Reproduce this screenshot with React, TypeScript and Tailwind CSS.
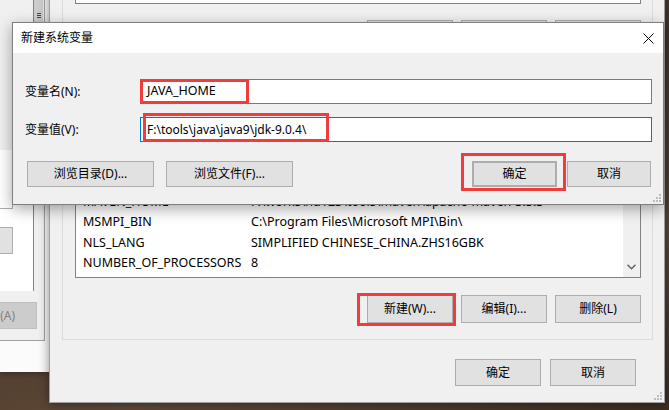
import React from "react";

const FONT = "font-['Noto_Sans','Noto_Sans_CJK_SC',sans-serif]";

function Btn({
  children,
  className = "",
}: {
  children?: React.ReactNode;
  className?: string;
}) {
  return (
    <div
      className={`flex h-full shrink-0 items-center justify-center border border-[#adadad] bg-[#e1e1e1] text-[12px] text-black ${className}`}
    >
      {children}
    </div>
  );
}

// little resize grip in the lower right corner
function Grip() {
  return (
    <svg width="8" height="8" viewBox="0 0 8 8" aria-hidden="true">
      <rect x="6" y="0" width="2" height="2" fill="#bcbcbc" />
      <rect x="3" y="3" width="2" height="2" fill="#bcbcbc" />
      <rect x="6" y="3" width="2" height="2" fill="#bcbcbc" />
      <rect x="0" y="6" width="2" height="2" fill="#bcbcbc" />
      <rect x="3" y="6" width="2" height="2" fill="#bcbcbc" />
      <rect x="6" y="6" width="2" height="2" fill="#bcbcbc" />
    </svg>
  );
}

// rows above MAVEN_HOME are scrolled out of view behind the dialog
const SYS_VARS: [string, string][] = [
  ["MAVEN_HOME", "F:\\works\\nu123\\tools\\maven\\apache-maven-3.5.3"],
  ["MSMPI_BIN", "C:\\Program Files\\Microsoft MPI\\Bin\\"],
  ["NLS_LANG", "SIMPLIFIED CHINESE_CHINA.ZHS16GBK"],
  ["NUMBER_OF_PROCESSORS", "8"],
];

function RedBox({ className }: { className: string }) {
  return (
    <div
      className={`pointer-events-none absolute border-[3px] border-[#f03c3c] ${className}`}
    />
  );
}

export default function App() {
  return (
    <div
      className={`relative h-[410px] w-[669px] overflow-hidden bg-[linear-gradient(160deg,#7a5330_0%,#4a382a_40%,#5d4736_70%,#3b2d22_100%)] ${FONT}`}
    >
      {/* window behind, far left */}
      <div className="absolute left-0 top-0 h-[372px] w-[49px] bg-[#fbfbfb] shadow-[0_2px_6px_rgba(0,0,0,0.3)]" />

      {/* window A (partly off screen) */}
      <div className="absolute left-0 top-0 flex h-[341px] w-[45px] flex-col border-b border-r border-[#a0a0a0] bg-[#f0f0f0]">
        <div className="flex h-[291px]">
          <div className="flex w-[34px] flex-col border-r border-[#828282] bg-white">
            <div className="h-[150px] bg-[#f0f0f0]" />
            <div className="h-[59px] w-[13px] border-b border-r border-[#adadad]" />
            <div className="mt-[18px] h-[27px] w-[13px] border-y border-r border-[#adadad] bg-[#e1e1e1]" />
          </div>
          <div className="flex w-[9px] flex-col">
            <div className="flex h-[22px] flex-col items-center bg-[#cdcdcd] pt-[13px]">
              <div className="h-px w-[4px] bg-[#444]" />
              <div className="mt-[1px] h-px w-[4px] bg-[#444]" />
              <div className="mt-[1px] h-px w-[4px] bg-[#444]" />
            </div>
          </div>
        </div>
        <div className="mt-[11px] flex h-[27px] w-[37px] items-center justify-end border-y border-r border-[#bfbfbf] bg-[#cccccc] pr-[21px] text-[12px] text-[#838383]">
          <span className="whitespace-nowrap">(A)</span>
        </div>
      </div>

      {/* Environment variables window */}
      <div className="absolute left-[49px] top-[-100px] flex h-[503px] w-[616px] flex-col border border-[#9f9f9f] bg-[#f0f0f0] pl-[12px] pr-[11px] shadow-[0_0_10px_rgba(0,0,0,0.45)]">
        {/* user variables group (mostly hidden behind the dialog) */}
        <div className="mt-[9px] flex h-[154px] flex-col border border-[#dcdcdc] px-[12px] pr-[11px] pt-[10px]">
          <div className="h-[83px] border border-[#828282] bg-white" />
          <div className="mt-[16px] flex h-[27px] justify-end gap-[8px]">
            <Btn className="w-[86px]" />
            <Btn className="w-[86px]" />
            <Btn className="w-[86px]" />
          </div>
        </div>

        {/* system variables group */}
        <div className="mt-[11px] flex h-[265px] flex-col border border-[#dcdcdc] px-[12px] pr-[11px] pt-[24px]">
          <div className="relative flex h-[178px] flex-col justify-end overflow-hidden border border-[#828282] bg-white pb-[3px] text-[12.5px] text-black">
            {SYS_VARS.map(([k, v]) => (
              <div key={k} className="flex h-[20.5px] shrink-0 items-center pl-[7px]">
                <span className="w-[168px] shrink-0 whitespace-nowrap">{k}</span>
                <span className="whitespace-nowrap">{v}</span>
              </div>
            ))}
            <div className="absolute bottom-0 right-0 top-0 flex w-[17px] flex-col items-center justify-end bg-[#f0f0f0] pb-[7px]">
              <svg width="9" height="6" viewBox="0 0 9 6" aria-hidden="true">
                <path d="M0.5 0.8 L4.5 4.8 L8.5 0.8" fill="none" stroke="#606060" strokeWidth="1.4" />
              </svg>
            </div>
          </div>
          <div className="mt-[17px] flex h-[28px] justify-end gap-[8px]">
            <Btn className="w-[86px]">新建(W)...</Btn>
            <Btn className="w-[86px]">编辑(I)...</Btn>
            <Btn className="w-[86px]">删除(L)</Btn>
          </div>
        </div>

        <div className="mr-[17px] mt-[19px] flex h-[27px] justify-end gap-[9px]">
          <Btn className="w-[86px]">确定</Btn>
          <Btn className="w-[86px]">取消</Btn>
        </div>
        <div className="absolute bottom-[2px] right-[2px] flex">
          <Grip />
        </div>
      </div>

      {/* dialog: 新建系统变量 */}
      <div className="absolute left-[12px] top-[22px] flex h-[183px] w-[652px] flex-col border border-[#7f7f7f] bg-[#f0f0f0] shadow-[0_4px_14px_rgba(0,0,0,0.35)]">
        <div className="flex h-[30px] shrink-0 items-center justify-between bg-white pl-[8px] pr-[9px] text-[12px] text-black">
          <span>新建系统变量</span>
          <svg width="11" height="11" viewBox="0 0 11 11" aria-hidden="true">
            <path d="M0.5 0.5 L10.5 10.5 M10.5 0.5 L0.5 10.5" stroke="#000" strokeWidth="1" />
          </svg>
        </div>

        <div className="flex flex-col pl-[12px] pr-[11px] pt-[26px] text-[12px] text-black">
          <div className="flex h-[25px] items-center">
            <span className="w-[115px] shrink-0">变量名(N):</span>
            <div className="flex h-full flex-1 items-center border border-[#7a7a7a] bg-white pl-[6px] text-[12.5px]">
              JAVA_HOME
            </div>
          </div>
          <div className="mt-[13px] flex h-[25px] items-center">
            <span className="w-[115px] shrink-0">变量值(V):</span>
            <div className="flex h-full flex-1 items-center border border-[#0078d7] bg-white pl-[6px]">
              F:\tools\java\java9\jdk-9.0.4\
            </div>
          </div>

          <div className="mt-[19px] flex h-[26px] items-center">
            <Btn className="ml-[2px] w-[127px]">浏览目录(D)...</Btn>
            <Btn className="ml-[12px] w-[127px]">浏览文件(F)...</Btn>
            <div className="flex-1" />
            <Btn className="w-[85px] border-2 border-[#0078d7]">确定</Btn>
            <Btn className="ml-[10px] mr-[1px] w-[84px]">取消</Btn>
          </div>
        </div>
        <div className="absolute bottom-[2px] right-[2px] flex">
          <Grip />
        </div>
      </div>

      {/* red annotation boxes */}
      <RedBox className="left-[140px] top-[79px] h-[25px] w-[109px]" />
      <RedBox className="left-[143px] top-[113px] h-[29px] w-[186px]" />
      <RedBox className="left-[461px] top-[153px] h-[38px] w-[105px]" />
      <RedBox className="left-[357px] top-[293px] h-[33px] w-[99px]" />
    </div>
  );
}
